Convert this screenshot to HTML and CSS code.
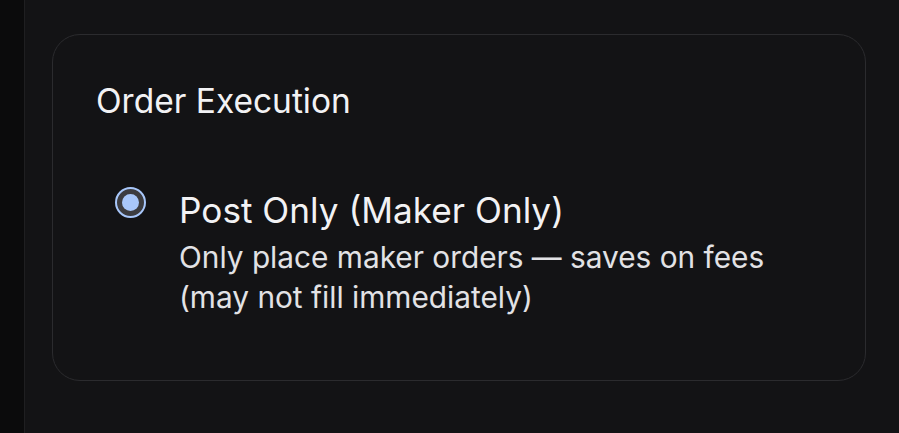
FILE: index.html
```html
<!DOCTYPE html>
<html lang="en">
<head>
<meta charset="utf-8">
<title>Order Execution</title>
<link rel="stylesheet" href="styles.css">
</head>
<body>
<div class="layout">
  <aside class="rail"></aside>
  <main class="main">
    <section class="card">
      <h2 class="card-title">Order Execution</h2>
      <label class="option">
        <span class="radio"><span class="radio-dot"></span></span>
        <span class="option-text">
          <span class="option-title">Post Only (Maker Only)</span>
          <span class="option-desc">Only place maker orders — saves on fees<br>(may not fill immediately)</span>
        </span>
      </label>
    </section>
  </main>
</div>
</body>
</html>
```

FILE: styles.css
```css
html, body {
  margin: 0;
  padding: 0;
  height: 100%;
  background: #131315;
  font-family: Inter, "Noto Sans", "Liberation Sans", sans-serif;
  color: #ececee;
}
.layout {
  display: flex;
  height: 100%;
}
.rail {
  width: 24px;
  flex: none;
  background: #0b0b0c;
  border-right: 1px solid #1f1f21;
}
.main {
  flex: 1;
  padding: 34px 33px 0 27px;
}
.card {
  border: 1px solid #2b2b2e;
  border-radius: 28px;
  padding: 46px 42px 63px 43px;
  background: #131315;
}
.card-title {
  margin: 0;
  font-size: 33.5px;
  font-weight: 400;
  line-height: 40px;
  color: #f2f2f4;
}
.option {
  display: flex;
  align-items: flex-start;
  gap: 33px;
  margin-top: 69px;
  padding-left: 19px;
}
.radio {
  width: 31px;
  height: 31px;
  box-sizing: border-box;
  border-radius: 50%;
  border: 2px solid #a8c7fa;
  background: #3c3c40;
  display: flex;
  align-items: center;
  justify-content: center;
  flex: none;
  margin-top: -3px;
}
.radio-dot {
  width: 17px;
  height: 17px;
  border-radius: 50%;
  background: #a8c7fa;
}
.option-text {
  display: flex;
  flex-direction: column;
}
.option-title {
  font-size: 35.2px;
  line-height: 40px;
  color: #f2f2f4;
}
.option-desc {
  font-size: 29.8px;
  line-height: 40px;
  color: #e2e2e5;
  margin-top: 7px;
}
```
